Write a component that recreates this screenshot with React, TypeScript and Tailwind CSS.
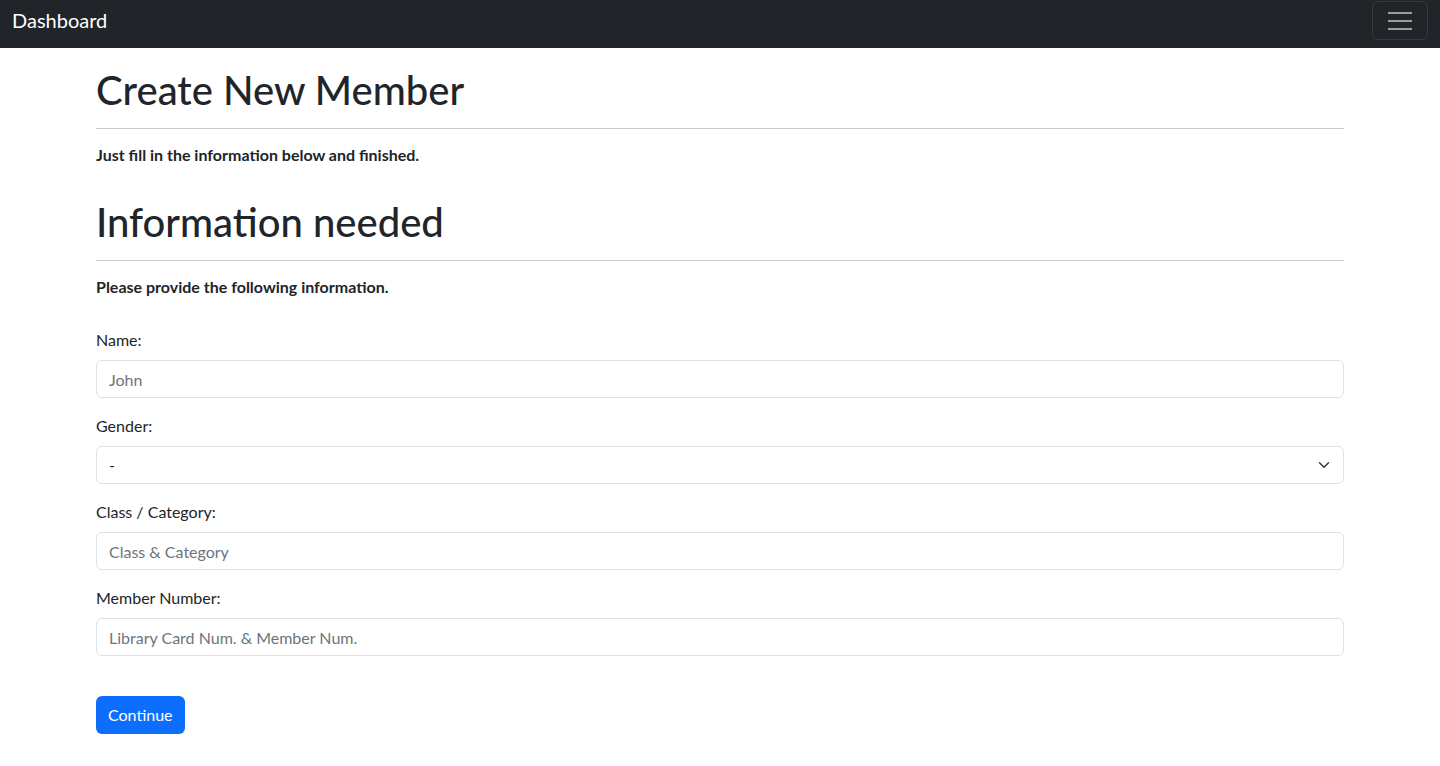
import React from "react";

const font = { fontFamily: 'Lato, "Noto Sans", "Liberation Sans", sans-serif' };

function Field({ label, placeholder }: { label: string; placeholder: string }) {
  return (
    <div>
      <label className="block text-[16px] leading-[24px] text-[#212529]">{label}</label>
      <input
        type="text"
        placeholder={placeholder}
        className="mt-2 block h-[38px] w-full rounded-[6px] border border-[#dee2e6] bg-white px-3 text-[16px] text-[#212529] outline-none placeholder:text-[#6c757d]"
      />
    </div>
  );
}

export default function App() {
  return (
    <div className="min-h-screen bg-white" style={font}>
      <nav className="flex h-12 items-start justify-between bg-[#212529] px-3">
        <span className="mt-[5px] text-[20px] leading-[30px] text-white">Dashboard</span>
        <button className="mt-[1px] flex h-[39px] w-[56px] flex-col items-center justify-center gap-[6px] rounded-[6px] border border-white/10">
          <span className="block h-[2px] w-[24px] bg-white/55" />
          <span className="block h-[2px] w-[24px] bg-white/55" />
          <span className="block h-[2px] w-[24px] bg-white/55" />
        </button>
      </nav>
      <main className="mx-auto w-[1248px]">
        <h1 className="mt-[18px] text-[40px] font-medium leading-[48px] text-[#212529]">Create New Member</h1>
        <hr className="mt-[14px] border-0 border-t border-[#c8c9ca]" />
        <p className="mt-[14px] text-[16px] font-bold leading-[24px] text-[#212529]">
          Just fill in the information below and finished.
        </p>
        <h2 className="mt-[31px] text-[40px] font-medium leading-[48px] text-[#212529]">Information needed</h2>
        <hr className="mt-[14px] border-0 border-t border-[#c8c9ca]" />
        <p className="mt-[14px] text-[16px] font-bold leading-[24px] text-[#212529]">
          Please provide the following information.
        </p>
        <form className="mt-[29px] flex flex-col items-start" onSubmit={(e) => e.preventDefault()}>
          <div className="flex w-full flex-col gap-4">
            <Field label="Name:" placeholder="John" />
            <div>
              <label className="block text-[16px] leading-[24px] text-[#212529]">Gender:</label>
              <div className="relative mt-2">
                <select className="block h-[38px] w-full appearance-none rounded-[6px] border border-[#dee2e6] bg-white px-3 text-[16px] text-[#212529] outline-none">
                  <option>-</option>
                  <option>Male</option>
                  <option>Female</option>
                </select>
                <svg
                  className="pointer-events-none absolute right-3 top-1/2 -translate-y-1/2"
                  width="16"
                  height="12"
                  viewBox="0 0 16 16"
                  fill="none"
                  stroke="#343a40"
                  strokeWidth="2"
                  strokeLinecap="round"
                  strokeLinejoin="round"
                >
                  <path d="m2 5 6 6 6-6" />
                </svg>
              </div>
            </div>
            <Field label="Class / Category:" placeholder="Class & Category" />
            <Field label="Member Number:" placeholder="Library Card Num. & Member Num." />
          </div>
          <button
            type="submit"
            className="mt-10 h-[38px] rounded-[6px] bg-[#0d6efd] px-3 text-[16px] text-white"
          >
            Continue
          </button>
        </form>
      </main>
    </div>
  );
}
